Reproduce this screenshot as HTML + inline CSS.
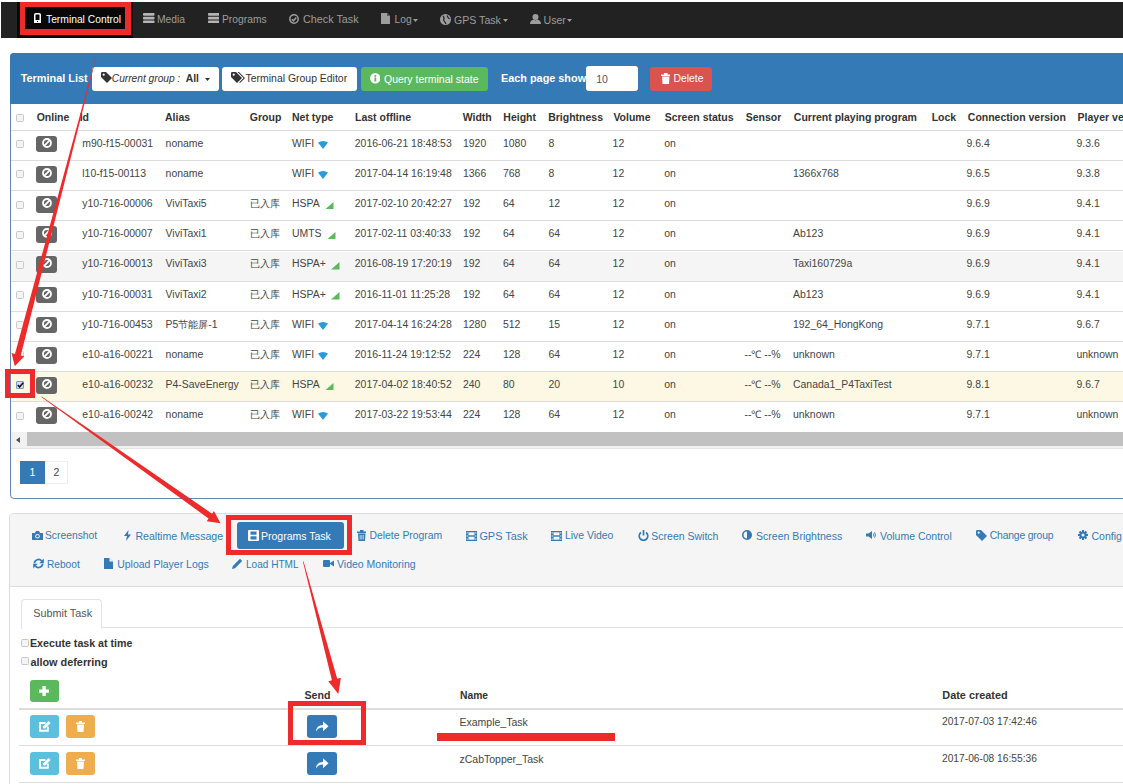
<!DOCTYPE html>
<html><head><meta charset="utf-8"><style>
html,body{margin:0;padding:0;}
body{width:1123px;height:784px;overflow:hidden;position:relative;background:#fff;font-family:"Liberation Sans", sans-serif;}
</style></head><body>
<div style="position:absolute;left:1px;top:2px;width:1122px;height:35.5px;background:#222;"></div>
<div style="position:absolute;left:17px;top:2px;width:115.5px;height:35.5px;background:#080808;"></div>
<svg style="position:absolute;left:34px;top:13px;" width="7" height="10" viewBox="0 0 7 10"><rect x="0.75" y="0.75" width="5.5" height="8.5" rx="1" fill="none" stroke="#fff" stroke-width="1.5"/><rect x="0" y="7" width="7" height="3" fill="#fff"/><rect x="3" y="8" width="1" height="1" fill="#080808"/></svg>
<span style="position:absolute;left:46px;top:14.78px;font-size:10.3px;line-height:10.3px;color:#fff;font-weight:normal;font-style:normal;white-space:nowrap;">Terminal Control</span>
<svg style="position:absolute;left:143px;top:12.8px;" width="11.5" height="10.2" viewBox="0 0 11.5 10.2"><rect x="0" y="0" width="11.5" height="2.8" rx="0.8" fill="#b4b4b4"/><rect x="0" y="3.7" width="11.5" height="2.8" rx="0.8" fill="#b4b4b4"/><rect x="0" y="7.4" width="11.5" height="2.8" rx="0.8" fill="#b4b4b4"/></svg>
<span style="position:absolute;left:157px;top:14.78px;font-size:10.3px;line-height:10.3px;color:#9d9d9d;font-weight:normal;font-style:normal;white-space:nowrap;">Media</span>
<svg style="position:absolute;left:207.8px;top:12.8px;" width="11.5" height="10.2" viewBox="0 0 11.5 10.2"><rect x="0" y="0" width="11.5" height="2.8" rx="0.8" fill="#b4b4b4"/><rect x="0" y="3.7" width="11.5" height="2.8" rx="0.8" fill="#b4b4b4"/><rect x="0" y="7.4" width="11.5" height="2.8" rx="0.8" fill="#b4b4b4"/></svg>
<span style="position:absolute;left:222px;top:14.78px;font-size:10.3px;line-height:10.3px;color:#9d9d9d;font-weight:normal;font-style:normal;white-space:nowrap;">Programs</span>
<svg style="position:absolute;left:289px;top:14px;" width="10" height="10" viewBox="0 0 10 10"><circle cx="5" cy="5" r="4.2" fill="none" stroke="#9d9d9d" stroke-width="1.5"/><path d="M2.8 5.2 L4.4 6.8 L7.3 3.6" fill="none" stroke="#9d9d9d" stroke-width="1.5"/></svg>
<span style="position:absolute;left:303px;top:14.36px;font-size:10.8px;line-height:10.8px;color:#9d9d9d;font-weight:normal;font-style:normal;white-space:nowrap;">Check Task</span>
<svg style="position:absolute;left:381px;top:13px;" width="9" height="11" viewBox="0 0 9 11"><path d="M0 0 H6 L9 3 V11 H0 Z" fill="#9d9d9d"/><path d="M6 0 V3 H9" fill="#555"/></svg>
<span style="position:absolute;left:394.5px;top:14.78px;font-size:10.3px;line-height:10.3px;color:#9d9d9d;font-weight:normal;font-style:normal;white-space:nowrap;">Log</span>
<svg style="position:absolute;left:413px;top:19px;" width="5" height="3" viewBox="0 0 5 3"><path d="M0 0 H5 L2.5 3 Z" fill="#9d9d9d"/></svg>
<svg style="position:absolute;left:439.5px;top:13.5px;" width="11" height="11" viewBox="0 0 11 11"><circle cx="5.5" cy="5.5" r="5.5" fill="#9d9d9d"/><path d="M3 2 Q5 4 3.5 6 Q5 8 6 10 M7 1.5 Q8 4 9.5 5" stroke="#222" stroke-width="1.2" fill="none"/></svg>
<span style="position:absolute;left:454px;top:14.53px;font-size:10.6px;line-height:10.6px;color:#9d9d9d;font-weight:normal;font-style:normal;white-space:nowrap;">GPS Task</span>
<svg style="position:absolute;left:503px;top:19px;" width="5" height="3" viewBox="0 0 5 3"><path d="M0 0 H5 L2.5 3 Z" fill="#9d9d9d"/></svg>
<svg style="position:absolute;left:530px;top:13.5px;" width="11" height="10" viewBox="0 0 11 10"><circle cx="5.5" cy="3" r="3" fill="#9d9d9d"/><path d="M0 10 Q0 6 4 5.5 L5.5 6.5 L7 5.5 Q11 6 11 10 Z" fill="#9d9d9d"/></svg>
<span style="position:absolute;left:543.5px;top:14.53px;font-size:10.6px;line-height:10.6px;color:#9d9d9d;font-weight:normal;font-style:normal;white-space:nowrap;">User</span>
<svg style="position:absolute;left:567px;top:19px;" width="5" height="3" viewBox="0 0 5 3"><path d="M0 0 H5 L2.5 3 Z" fill="#9d9d9d"/></svg>
<div style="position:absolute;left:9.5px;top:53px;width:1200px;height:444px;border:1px solid #6489b0;border-radius:4px;background:#fff;"></div>
<div style="position:absolute;left:9.5px;top:53px;width:1202px;height:50.5px;background:#337ab7;border-radius:4px 4px 0 0;"></div>
<span style="position:absolute;left:20.7px;top:72.57px;font-size:10.9px;line-height:10.9px;color:#fff;font-weight:bold;font-style:normal;white-space:nowrap;">Terminal List</span>
<div style="position:absolute;left:92.3px;top:67px;width:126.5px;height:23.5px;background:#fff;border-radius:3px;"></div>
<svg style="position:absolute;left:100.5px;top:71.5px;" width="11" height="11" viewBox="0 0 11 11"><path d="M0 1.2 Q0 0 1.2 0 H5 L11 6 L6 11 L0 5 Z" fill="#333"/><circle cx="2.7" cy="2.7" r="1.1" fill="#fff"/></svg>
<span style="position:absolute;left:111.8px;top:73.57px;font-size:10.2px;line-height:10.2px;color:#333;font-weight:normal;font-style:italic;white-space:nowrap;">Current group</span>
<span style="position:absolute;left:177.2px;top:73.57px;font-size:10.2px;line-height:10.2px;color:#333;font-weight:normal;font-style:italic;white-space:nowrap;">:</span>
<span style="position:absolute;left:185.8px;top:73.58px;font-size:10.3px;line-height:10.3px;color:#333;font-weight:bold;font-style:normal;white-space:nowrap;">All</span>
<svg style="position:absolute;left:205px;top:78px;" width="5" height="3" viewBox="0 0 5 3"><path d="M0 0 H5 L2.5 3 Z" fill="#333"/></svg>
<div style="position:absolute;left:222px;top:67px;width:135px;height:23.5px;background:#fff;border-radius:3px;"></div>
<svg style="position:absolute;left:231px;top:71.5px;" width="14" height="11" viewBox="0 0 14 11"><path d="M0 1.2 Q0 0 1.2 0 H5 L11 6 L6 11 L0 5 Z" fill="#333"/><circle cx="2.7" cy="2.7" r="1.1" fill="#fff"/><path d="M6.5 0 H8 L14 6 L9 11 L8.3 10.3 L12.6 6 Z" fill="#333"/></svg>
<span style="position:absolute;left:245.6px;top:73.95px;font-size:10.45px;line-height:10.45px;color:#333;font-weight:normal;font-style:normal;white-space:nowrap;">Terminal Group Editor</span>
<div style="position:absolute;left:360.7px;top:67px;width:127px;height:23.5px;background:#5cb85c;border-radius:3px;"></div>
<svg style="position:absolute;left:369.5px;top:73px;" width="10.5" height="10.5" viewBox="0 0 10.5 10.5"><circle cx="5.25" cy="5.25" r="5.25" fill="#fff"/><rect x="4.4" y="4.5" width="1.8" height="4" fill="#5cb85c"/><circle cx="5.3" cy="2.9" r="1" fill="#5cb85c"/></svg>
<span style="position:absolute;left:384px;top:73.91px;font-size:10.5px;line-height:10.5px;color:#fff;font-weight:normal;font-style:normal;white-space:nowrap;">Query terminal state</span>
<span style="position:absolute;left:501px;top:73.30px;font-size:10.87px;line-height:10.87px;color:#fff;font-weight:bold;font-style:normal;white-space:nowrap;">Each page show</span>
<div style="position:absolute;left:586px;top:66px;width:51.5px;height:25px;background:#fff;border-radius:3px;"></div>
<span style="position:absolute;left:596.2px;top:74.11px;font-size:10.5px;line-height:10.5px;color:#555;font-weight:normal;font-style:normal;white-space:nowrap;">10</span>
<div style="position:absolute;left:650.4px;top:67px;width:62px;height:23.5px;background:#d9534f;border-radius:3px;"></div>
<svg style="position:absolute;left:660.5px;top:72.5px;" width="9.5" height="11" viewBox="0 0 9.5 11"><rect x="0" y="1.5" width="9.5" height="1.5" fill="#fff"/><rect x="3" y="0" width="3.5" height="2" fill="#fff"/><path d="M1 3.5 H8.5 L8 11 H1.5 Z" fill="#fff"/></svg>
<span style="position:absolute;left:673.5px;top:74.00px;font-size:10.4px;line-height:10.4px;color:#fff;font-weight:normal;font-style:normal;white-space:nowrap;">Delete</span>
<div style="position:absolute;left:16px;top:113.5px;width:8px;height:8px;background:#f4f4f4;border:1px solid #c8c8c8;border-radius:1.5px;box-sizing:border-box;"></div>
<span style="position:absolute;left:36.7px;top:111.91px;font-size:10.5px;line-height:10.5px;color:#333;font-weight:bold;font-style:normal;white-space:nowrap;">Online</span>
<span style="position:absolute;left:79.7px;top:111.91px;font-size:10.5px;line-height:10.5px;color:#333;font-weight:bold;font-style:normal;white-space:nowrap;">Id</span>
<span style="position:absolute;left:165px;top:111.91px;font-size:10.5px;line-height:10.5px;color:#333;font-weight:bold;font-style:normal;white-space:nowrap;">Alias</span>
<span style="position:absolute;left:249.8px;top:111.91px;font-size:10.5px;line-height:10.5px;color:#333;font-weight:bold;font-style:normal;white-space:nowrap;">Group</span>
<span style="position:absolute;left:292px;top:111.91px;font-size:10.5px;line-height:10.5px;color:#333;font-weight:bold;font-style:normal;white-space:nowrap;">Net type</span>
<span style="position:absolute;left:355px;top:111.91px;font-size:10.5px;line-height:10.5px;color:#333;font-weight:bold;font-style:normal;white-space:nowrap;">Last offline</span>
<span style="position:absolute;left:462.7px;top:111.91px;font-size:10.5px;line-height:10.5px;color:#333;font-weight:bold;font-style:normal;white-space:nowrap;">Width</span>
<span style="position:absolute;left:503.3px;top:111.91px;font-size:10.5px;line-height:10.5px;color:#333;font-weight:bold;font-style:normal;white-space:nowrap;">Height</span>
<span style="position:absolute;left:548.2px;top:111.91px;font-size:10.5px;line-height:10.5px;color:#333;font-weight:bold;font-style:normal;white-space:nowrap;">Brightness</span>
<span style="position:absolute;left:613.4px;top:111.91px;font-size:10.5px;line-height:10.5px;color:#333;font-weight:bold;font-style:normal;white-space:nowrap;">Volume</span>
<span style="position:absolute;left:664.7px;top:111.91px;font-size:10.5px;line-height:10.5px;color:#333;font-weight:bold;font-style:normal;white-space:nowrap;">Screen status</span>
<span style="position:absolute;left:745.7px;top:111.91px;font-size:10.5px;line-height:10.5px;color:#333;font-weight:bold;font-style:normal;white-space:nowrap;">Sensor</span>
<span style="position:absolute;left:793.8px;top:111.91px;font-size:10.5px;line-height:10.5px;color:#333;font-weight:bold;font-style:normal;white-space:nowrap;">Current playing program</span>
<span style="position:absolute;left:931.7px;top:111.91px;font-size:10.5px;line-height:10.5px;color:#333;font-weight:bold;font-style:normal;white-space:nowrap;">Lock</span>
<span style="position:absolute;left:967.8px;top:111.91px;font-size:10.5px;line-height:10.5px;color:#333;font-weight:bold;font-style:normal;white-space:nowrap;">Connection version</span>
<span style="position:absolute;left:1077.6px;top:111.91px;font-size:10.5px;line-height:10.5px;color:#333;font-weight:bold;font-style:normal;white-space:nowrap;">Player version</span>
<div style="position:absolute;left:10.5px;top:129.7px;width:1113px;height:1px;background:#ddd;"></div>
<div style="position:absolute;left:10.5px;top:131.2px;width:1113px;height:29.16px;background:#fff;"></div>
<div style="position:absolute;left:10.5px;top:159.85999999999999px;width:1113px;height:1px;background:#ddd;"></div>
<div style="position:absolute;left:16px;top:140.2px;width:8px;height:8px;background:#f4f4f4;border:1px solid #c8c8c8;border-radius:1.5px;box-sizing:border-box;"></div>
<div style="position:absolute;left:36.3px;top:135.70px;width:21px;height:16.8px;background:#666;border-radius:3px;"></div>
<svg style="position:absolute;left:42px;top:137.79999999999998px;" width="10" height="10" viewBox="0 0 10 10"><circle cx="5" cy="5" r="4" fill="none" stroke="#fff" stroke-width="1.8"/><path d="M2.2 7.8 L7.8 2.2" stroke="#fff" stroke-width="1.8"/></svg>
<span style="position:absolute;left:82.3px;top:138.75px;font-size:10.45px;line-height:10.45px;color:#444;font-weight:normal;font-style:normal;white-space:nowrap;">m90-f15-00031</span>
<span style="position:absolute;left:165.6px;top:138.75px;font-size:10.45px;line-height:10.45px;color:#444;font-weight:normal;font-style:normal;white-space:nowrap;">noname</span>
<span style="position:absolute;left:292px;top:138.75px;font-size:10.45px;line-height:10.45px;color:#444;font-weight:normal;font-style:normal;white-space:nowrap;">WIFI</span>
<svg style="position:absolute;left:318.052765625px;top:140.7px;" width="10" height="8" viewBox="0 0 10 8"><path d="M0 1.5 Q5 -1.5 10 1.5 L5 8 Z" fill="#2a9ad8"/></svg>
<span style="position:absolute;left:354.8px;top:138.75px;font-size:10.45px;line-height:10.45px;color:#444;font-weight:normal;font-style:normal;white-space:nowrap;">2016-06-21 18:48:53</span>
<span style="position:absolute;left:463px;top:138.75px;font-size:10.45px;line-height:10.45px;color:#444;font-weight:normal;font-style:normal;white-space:nowrap;">1920</span>
<span style="position:absolute;left:503px;top:138.75px;font-size:10.45px;line-height:10.45px;color:#444;font-weight:normal;font-style:normal;white-space:nowrap;">1080</span>
<span style="position:absolute;left:548.5px;top:138.75px;font-size:10.45px;line-height:10.45px;color:#444;font-weight:normal;font-style:normal;white-space:nowrap;">8</span>
<span style="position:absolute;left:612.6px;top:138.75px;font-size:10.45px;line-height:10.45px;color:#444;font-weight:normal;font-style:normal;white-space:nowrap;">12</span>
<span style="position:absolute;left:664.3px;top:138.75px;font-size:10.45px;line-height:10.45px;color:#444;font-weight:normal;font-style:normal;white-space:nowrap;">on</span>
<span style="position:absolute;left:966.5px;top:138.75px;font-size:10.45px;line-height:10.45px;color:#444;font-weight:normal;font-style:normal;white-space:nowrap;">9.6.4</span>
<span style="position:absolute;left:1076.5px;top:138.75px;font-size:10.45px;line-height:10.45px;color:#444;font-weight:normal;font-style:normal;white-space:nowrap;">9.3.6</span>
<div style="position:absolute;left:10.5px;top:161.35999999999999px;width:1113px;height:29.16px;background:#fff;"></div>
<div style="position:absolute;left:10.5px;top:190.01999999999998px;width:1113px;height:1px;background:#ddd;"></div>
<div style="position:absolute;left:16px;top:170.35999999999999px;width:8px;height:8px;background:#f4f4f4;border:1px solid #c8c8c8;border-radius:1.5px;box-sizing:border-box;"></div>
<div style="position:absolute;left:36.3px;top:165.86px;width:21px;height:16.8px;background:#666;border-radius:3px;"></div>
<svg style="position:absolute;left:42px;top:167.95999999999998px;" width="10" height="10" viewBox="0 0 10 10"><circle cx="5" cy="5" r="4" fill="none" stroke="#fff" stroke-width="1.8"/><path d="M2.2 7.8 L7.8 2.2" stroke="#fff" stroke-width="1.8"/></svg>
<span style="position:absolute;left:82.3px;top:168.91px;font-size:10.45px;line-height:10.45px;color:#444;font-weight:normal;font-style:normal;white-space:nowrap;">l10-f15-00113</span>
<span style="position:absolute;left:165.6px;top:168.91px;font-size:10.45px;line-height:10.45px;color:#444;font-weight:normal;font-style:normal;white-space:nowrap;">noname</span>
<span style="position:absolute;left:292px;top:168.91px;font-size:10.45px;line-height:10.45px;color:#444;font-weight:normal;font-style:normal;white-space:nowrap;">WIFI</span>
<svg style="position:absolute;left:318.052765625px;top:170.85999999999999px;" width="10" height="8" viewBox="0 0 10 8"><path d="M0 1.5 Q5 -1.5 10 1.5 L5 8 Z" fill="#2a9ad8"/></svg>
<span style="position:absolute;left:354.8px;top:168.91px;font-size:10.45px;line-height:10.45px;color:#444;font-weight:normal;font-style:normal;white-space:nowrap;">2017-04-14 16:19:48</span>
<span style="position:absolute;left:463px;top:168.91px;font-size:10.45px;line-height:10.45px;color:#444;font-weight:normal;font-style:normal;white-space:nowrap;">1366</span>
<span style="position:absolute;left:503px;top:168.91px;font-size:10.45px;line-height:10.45px;color:#444;font-weight:normal;font-style:normal;white-space:nowrap;">768</span>
<span style="position:absolute;left:548.5px;top:168.91px;font-size:10.45px;line-height:10.45px;color:#444;font-weight:normal;font-style:normal;white-space:nowrap;">8</span>
<span style="position:absolute;left:612.6px;top:168.91px;font-size:10.45px;line-height:10.45px;color:#444;font-weight:normal;font-style:normal;white-space:nowrap;">12</span>
<span style="position:absolute;left:664.3px;top:168.91px;font-size:10.45px;line-height:10.45px;color:#444;font-weight:normal;font-style:normal;white-space:nowrap;">on</span>
<span style="position:absolute;left:793px;top:168.91px;font-size:10.45px;line-height:10.45px;color:#444;font-weight:normal;font-style:normal;white-space:nowrap;">1366x768</span>
<span style="position:absolute;left:966.5px;top:168.91px;font-size:10.45px;line-height:10.45px;color:#444;font-weight:normal;font-style:normal;white-space:nowrap;">9.6.5</span>
<span style="position:absolute;left:1076.5px;top:168.91px;font-size:10.45px;line-height:10.45px;color:#444;font-weight:normal;font-style:normal;white-space:nowrap;">9.3.8</span>
<div style="position:absolute;left:10.5px;top:191.51999999999998px;width:1113px;height:29.16px;background:#fff;"></div>
<div style="position:absolute;left:10.5px;top:220.17999999999998px;width:1113px;height:1px;background:#ddd;"></div>
<div style="position:absolute;left:16px;top:200.51999999999998px;width:8px;height:8px;background:#f4f4f4;border:1px solid #c8c8c8;border-radius:1.5px;box-sizing:border-box;"></div>
<div style="position:absolute;left:36.3px;top:196.02px;width:21px;height:16.8px;background:#666;border-radius:3px;"></div>
<svg style="position:absolute;left:42px;top:198.11999999999998px;" width="10" height="10" viewBox="0 0 10 10"><circle cx="5" cy="5" r="4" fill="none" stroke="#fff" stroke-width="1.8"/><path d="M2.2 7.8 L7.8 2.2" stroke="#fff" stroke-width="1.8"/></svg>
<span style="position:absolute;left:82.3px;top:199.07px;font-size:10.45px;line-height:10.45px;color:#444;font-weight:normal;font-style:normal;white-space:nowrap;">y10-716-00006</span>
<span style="position:absolute;left:165.6px;top:199.07px;font-size:10.45px;line-height:10.45px;color:#444;font-weight:normal;font-style:normal;white-space:nowrap;">ViviTaxi5</span>
<span style="position:absolute;left:249.8px;top:199.07px;font-size:10.45px;line-height:10.45px;color:#444;font-weight:normal;font-style:normal;white-space:nowrap;">已入库</span>
<span style="position:absolute;left:292px;top:199.07px;font-size:10.45px;line-height:10.45px;color:#444;font-weight:normal;font-style:normal;white-space:nowrap;">HSPA</span>
<svg style="position:absolute;left:325.182703125px;top:201.82px;" width="8.5" height="7.5" viewBox="0 0 8.5 7.5"><path d="M8.5 0 V7.5 H0 Z" fill="#5cb85c"/></svg>
<span style="position:absolute;left:354.8px;top:199.07px;font-size:10.45px;line-height:10.45px;color:#444;font-weight:normal;font-style:normal;white-space:nowrap;">2017-02-10 20:42:27</span>
<span style="position:absolute;left:463px;top:199.07px;font-size:10.45px;line-height:10.45px;color:#444;font-weight:normal;font-style:normal;white-space:nowrap;">192</span>
<span style="position:absolute;left:503px;top:199.07px;font-size:10.45px;line-height:10.45px;color:#444;font-weight:normal;font-style:normal;white-space:nowrap;">64</span>
<span style="position:absolute;left:548.5px;top:199.07px;font-size:10.45px;line-height:10.45px;color:#444;font-weight:normal;font-style:normal;white-space:nowrap;">12</span>
<span style="position:absolute;left:612.6px;top:199.07px;font-size:10.45px;line-height:10.45px;color:#444;font-weight:normal;font-style:normal;white-space:nowrap;">12</span>
<span style="position:absolute;left:664.3px;top:199.07px;font-size:10.45px;line-height:10.45px;color:#444;font-weight:normal;font-style:normal;white-space:nowrap;">on</span>
<span style="position:absolute;left:966.5px;top:199.07px;font-size:10.45px;line-height:10.45px;color:#444;font-weight:normal;font-style:normal;white-space:nowrap;">9.6.9</span>
<span style="position:absolute;left:1076.5px;top:199.07px;font-size:10.45px;line-height:10.45px;color:#444;font-weight:normal;font-style:normal;white-space:nowrap;">9.4.1</span>
<div style="position:absolute;left:10.5px;top:221.68px;width:1113px;height:29.16px;background:#fff;"></div>
<div style="position:absolute;left:10.5px;top:250.34px;width:1113px;height:1px;background:#ddd;"></div>
<div style="position:absolute;left:16px;top:230.68px;width:8px;height:8px;background:#f4f4f4;border:1px solid #c8c8c8;border-radius:1.5px;box-sizing:border-box;"></div>
<div style="position:absolute;left:36.3px;top:226.18px;width:21px;height:16.8px;background:#666;border-radius:3px;"></div>
<svg style="position:absolute;left:42px;top:228.28px;" width="10" height="10" viewBox="0 0 10 10"><circle cx="5" cy="5" r="4" fill="none" stroke="#fff" stroke-width="1.8"/><path d="M2.2 7.8 L7.8 2.2" stroke="#fff" stroke-width="1.8"/></svg>
<span style="position:absolute;left:82.3px;top:229.23px;font-size:10.45px;line-height:10.45px;color:#444;font-weight:normal;font-style:normal;white-space:nowrap;">y10-716-00007</span>
<span style="position:absolute;left:165.6px;top:229.23px;font-size:10.45px;line-height:10.45px;color:#444;font-weight:normal;font-style:normal;white-space:nowrap;">ViviTaxi1</span>
<span style="position:absolute;left:249.8px;top:229.23px;font-size:10.45px;line-height:10.45px;color:#444;font-weight:normal;font-style:normal;white-space:nowrap;">已入库</span>
<span style="position:absolute;left:292px;top:229.23px;font-size:10.45px;line-height:10.45px;color:#444;font-weight:normal;font-style:normal;white-space:nowrap;">UMTS</span>
<svg style="position:absolute;left:327.1045234375px;top:231.98000000000002px;" width="8.5" height="7.5" viewBox="0 0 8.5 7.5"><path d="M8.5 0 V7.5 H0 Z" fill="#5cb85c"/></svg>
<span style="position:absolute;left:354.8px;top:229.23px;font-size:10.45px;line-height:10.45px;color:#444;font-weight:normal;font-style:normal;white-space:nowrap;">2017-02-11 03:40:33</span>
<span style="position:absolute;left:463px;top:229.23px;font-size:10.45px;line-height:10.45px;color:#444;font-weight:normal;font-style:normal;white-space:nowrap;">192</span>
<span style="position:absolute;left:503px;top:229.23px;font-size:10.45px;line-height:10.45px;color:#444;font-weight:normal;font-style:normal;white-space:nowrap;">64</span>
<span style="position:absolute;left:548.5px;top:229.23px;font-size:10.45px;line-height:10.45px;color:#444;font-weight:normal;font-style:normal;white-space:nowrap;">64</span>
<span style="position:absolute;left:612.6px;top:229.23px;font-size:10.45px;line-height:10.45px;color:#444;font-weight:normal;font-style:normal;white-space:nowrap;">12</span>
<span style="position:absolute;left:664.3px;top:229.23px;font-size:10.45px;line-height:10.45px;color:#444;font-weight:normal;font-style:normal;white-space:nowrap;">on</span>
<span style="position:absolute;left:793px;top:229.23px;font-size:10.45px;line-height:10.45px;color:#444;font-weight:normal;font-style:normal;white-space:nowrap;">Ab123</span>
<span style="position:absolute;left:966.5px;top:229.23px;font-size:10.45px;line-height:10.45px;color:#444;font-weight:normal;font-style:normal;white-space:nowrap;">9.6.9</span>
<span style="position:absolute;left:1076.5px;top:229.23px;font-size:10.45px;line-height:10.45px;color:#444;font-weight:normal;font-style:normal;white-space:nowrap;">9.4.1</span>
<div style="position:absolute;left:10.5px;top:251.83999999999997px;width:1113px;height:29.16px;background:#f5f5f5;"></div>
<div style="position:absolute;left:10.5px;top:280.5px;width:1113px;height:1px;background:#ddd;"></div>
<div style="position:absolute;left:16px;top:260.84px;width:8px;height:8px;background:#f4f4f4;border:1px solid #c8c8c8;border-radius:1.5px;box-sizing:border-box;"></div>
<div style="position:absolute;left:36.3px;top:256.34px;width:21px;height:16.8px;background:#666;border-radius:3px;"></div>
<svg style="position:absolute;left:42px;top:258.44px;" width="10" height="10" viewBox="0 0 10 10"><circle cx="5" cy="5" r="4" fill="none" stroke="#fff" stroke-width="1.8"/><path d="M2.2 7.8 L7.8 2.2" stroke="#fff" stroke-width="1.8"/></svg>
<span style="position:absolute;left:82.3px;top:259.39px;font-size:10.45px;line-height:10.45px;color:#444;font-weight:normal;font-style:normal;white-space:nowrap;">y10-716-00013</span>
<span style="position:absolute;left:165.6px;top:259.39px;font-size:10.45px;line-height:10.45px;color:#444;font-weight:normal;font-style:normal;white-space:nowrap;">ViviTaxi3</span>
<span style="position:absolute;left:249.8px;top:259.39px;font-size:10.45px;line-height:10.45px;color:#444;font-weight:normal;font-style:normal;white-space:nowrap;">已入库</span>
<span style="position:absolute;left:292px;top:259.39px;font-size:10.45px;line-height:10.45px;color:#444;font-weight:normal;font-style:normal;white-space:nowrap;">HSPA+</span>
<svg style="position:absolute;left:331.28615625px;top:262.14px;" width="8.5" height="7.5" viewBox="0 0 8.5 7.5"><path d="M8.5 0 V7.5 H0 Z" fill="#5cb85c"/></svg>
<span style="position:absolute;left:354.8px;top:259.39px;font-size:10.45px;line-height:10.45px;color:#444;font-weight:normal;font-style:normal;white-space:nowrap;">2016-08-19 17:20:19</span>
<span style="position:absolute;left:463px;top:259.39px;font-size:10.45px;line-height:10.45px;color:#444;font-weight:normal;font-style:normal;white-space:nowrap;">192</span>
<span style="position:absolute;left:503px;top:259.39px;font-size:10.45px;line-height:10.45px;color:#444;font-weight:normal;font-style:normal;white-space:nowrap;">64</span>
<span style="position:absolute;left:548.5px;top:259.39px;font-size:10.45px;line-height:10.45px;color:#444;font-weight:normal;font-style:normal;white-space:nowrap;">64</span>
<span style="position:absolute;left:612.6px;top:259.39px;font-size:10.45px;line-height:10.45px;color:#444;font-weight:normal;font-style:normal;white-space:nowrap;">12</span>
<span style="position:absolute;left:664.3px;top:259.39px;font-size:10.45px;line-height:10.45px;color:#444;font-weight:normal;font-style:normal;white-space:nowrap;">on</span>
<span style="position:absolute;left:793px;top:259.39px;font-size:10.45px;line-height:10.45px;color:#444;font-weight:normal;font-style:normal;white-space:nowrap;">Taxi160729a</span>
<span style="position:absolute;left:966.5px;top:259.39px;font-size:10.45px;line-height:10.45px;color:#444;font-weight:normal;font-style:normal;white-space:nowrap;">9.6.9</span>
<span style="position:absolute;left:1076.5px;top:259.39px;font-size:10.45px;line-height:10.45px;color:#444;font-weight:normal;font-style:normal;white-space:nowrap;">9.4.1</span>
<div style="position:absolute;left:10.5px;top:282.0px;width:1113px;height:29.16px;background:#fff;"></div>
<div style="position:absolute;left:10.5px;top:310.66px;width:1113px;height:1px;background:#ddd;"></div>
<div style="position:absolute;left:16px;top:291.0px;width:8px;height:8px;background:#f4f4f4;border:1px solid #c8c8c8;border-radius:1.5px;box-sizing:border-box;"></div>
<div style="position:absolute;left:36.3px;top:286.50px;width:21px;height:16.8px;background:#666;border-radius:3px;"></div>
<svg style="position:absolute;left:42px;top:288.6px;" width="10" height="10" viewBox="0 0 10 10"><circle cx="5" cy="5" r="4" fill="none" stroke="#fff" stroke-width="1.8"/><path d="M2.2 7.8 L7.8 2.2" stroke="#fff" stroke-width="1.8"/></svg>
<span style="position:absolute;left:82.3px;top:289.55px;font-size:10.45px;line-height:10.45px;color:#444;font-weight:normal;font-style:normal;white-space:nowrap;">y10-716-00031</span>
<span style="position:absolute;left:165.6px;top:289.55px;font-size:10.45px;line-height:10.45px;color:#444;font-weight:normal;font-style:normal;white-space:nowrap;">ViviTaxi2</span>
<span style="position:absolute;left:249.8px;top:289.55px;font-size:10.45px;line-height:10.45px;color:#444;font-weight:normal;font-style:normal;white-space:nowrap;">已入库</span>
<span style="position:absolute;left:292px;top:289.55px;font-size:10.45px;line-height:10.45px;color:#444;font-weight:normal;font-style:normal;white-space:nowrap;">HSPA+</span>
<svg style="position:absolute;left:331.28615625px;top:292.3px;" width="8.5" height="7.5" viewBox="0 0 8.5 7.5"><path d="M8.5 0 V7.5 H0 Z" fill="#5cb85c"/></svg>
<span style="position:absolute;left:354.8px;top:289.55px;font-size:10.45px;line-height:10.45px;color:#444;font-weight:normal;font-style:normal;white-space:nowrap;">2016-11-01 11:25:28</span>
<span style="position:absolute;left:463px;top:289.55px;font-size:10.45px;line-height:10.45px;color:#444;font-weight:normal;font-style:normal;white-space:nowrap;">192</span>
<span style="position:absolute;left:503px;top:289.55px;font-size:10.45px;line-height:10.45px;color:#444;font-weight:normal;font-style:normal;white-space:nowrap;">64</span>
<span style="position:absolute;left:548.5px;top:289.55px;font-size:10.45px;line-height:10.45px;color:#444;font-weight:normal;font-style:normal;white-space:nowrap;">64</span>
<span style="position:absolute;left:612.6px;top:289.55px;font-size:10.45px;line-height:10.45px;color:#444;font-weight:normal;font-style:normal;white-space:nowrap;">12</span>
<span style="position:absolute;left:664.3px;top:289.55px;font-size:10.45px;line-height:10.45px;color:#444;font-weight:normal;font-style:normal;white-space:nowrap;">on</span>
<span style="position:absolute;left:793px;top:289.55px;font-size:10.45px;line-height:10.45px;color:#444;font-weight:normal;font-style:normal;white-space:nowrap;">Ab123</span>
<span style="position:absolute;left:966.5px;top:289.55px;font-size:10.45px;line-height:10.45px;color:#444;font-weight:normal;font-style:normal;white-space:nowrap;">9.6.9</span>
<span style="position:absolute;left:1076.5px;top:289.55px;font-size:10.45px;line-height:10.45px;color:#444;font-weight:normal;font-style:normal;white-space:nowrap;">9.4.1</span>
<div style="position:absolute;left:10.5px;top:312.15999999999997px;width:1113px;height:29.16px;background:#fff;"></div>
<div style="position:absolute;left:10.5px;top:340.82px;width:1113px;height:1px;background:#ddd;"></div>
<div style="position:absolute;left:16px;top:321.15999999999997px;width:8px;height:8px;background:#f4f4f4;border:1px solid #c8c8c8;border-radius:1.5px;box-sizing:border-box;"></div>
<div style="position:absolute;left:36.3px;top:316.66px;width:21px;height:16.8px;background:#666;border-radius:3px;"></div>
<svg style="position:absolute;left:42px;top:318.76px;" width="10" height="10" viewBox="0 0 10 10"><circle cx="5" cy="5" r="4" fill="none" stroke="#fff" stroke-width="1.8"/><path d="M2.2 7.8 L7.8 2.2" stroke="#fff" stroke-width="1.8"/></svg>
<span style="position:absolute;left:82.3px;top:319.71px;font-size:10.45px;line-height:10.45px;color:#444;font-weight:normal;font-style:normal;white-space:nowrap;">y10-716-00453</span>
<span style="position:absolute;left:165.6px;top:319.71px;font-size:10.45px;line-height:10.45px;color:#444;font-weight:normal;font-style:normal;white-space:nowrap;">P5节能屏-1</span>
<span style="position:absolute;left:249.8px;top:319.71px;font-size:10.45px;line-height:10.45px;color:#444;font-weight:normal;font-style:normal;white-space:nowrap;">已入库</span>
<span style="position:absolute;left:292px;top:319.71px;font-size:10.45px;line-height:10.45px;color:#444;font-weight:normal;font-style:normal;white-space:nowrap;">WIFI</span>
<svg style="position:absolute;left:318.052765625px;top:321.65999999999997px;" width="10" height="8" viewBox="0 0 10 8"><path d="M0 1.5 Q5 -1.5 10 1.5 L5 8 Z" fill="#2a9ad8"/></svg>
<span style="position:absolute;left:354.8px;top:319.71px;font-size:10.45px;line-height:10.45px;color:#444;font-weight:normal;font-style:normal;white-space:nowrap;">2017-04-14 16:24:28</span>
<span style="position:absolute;left:463px;top:319.71px;font-size:10.45px;line-height:10.45px;color:#444;font-weight:normal;font-style:normal;white-space:nowrap;">1280</span>
<span style="position:absolute;left:503px;top:319.71px;font-size:10.45px;line-height:10.45px;color:#444;font-weight:normal;font-style:normal;white-space:nowrap;">512</span>
<span style="position:absolute;left:548.5px;top:319.71px;font-size:10.45px;line-height:10.45px;color:#444;font-weight:normal;font-style:normal;white-space:nowrap;">15</span>
<span style="position:absolute;left:612.6px;top:319.71px;font-size:10.45px;line-height:10.45px;color:#444;font-weight:normal;font-style:normal;white-space:nowrap;">12</span>
<span style="position:absolute;left:664.3px;top:319.71px;font-size:10.45px;line-height:10.45px;color:#444;font-weight:normal;font-style:normal;white-space:nowrap;">on</span>
<span style="position:absolute;left:793px;top:319.71px;font-size:10.45px;line-height:10.45px;color:#444;font-weight:normal;font-style:normal;white-space:nowrap;">192_64_HongKong</span>
<span style="position:absolute;left:966.5px;top:319.71px;font-size:10.45px;line-height:10.45px;color:#444;font-weight:normal;font-style:normal;white-space:nowrap;">9.7.1</span>
<span style="position:absolute;left:1076.5px;top:319.71px;font-size:10.45px;line-height:10.45px;color:#444;font-weight:normal;font-style:normal;white-space:nowrap;">9.6.7</span>
<div style="position:absolute;left:10.5px;top:342.32px;width:1113px;height:29.16px;background:#fff;"></div>
<div style="position:absolute;left:10.5px;top:370.98px;width:1113px;height:1px;background:#ddd;"></div>
<div style="position:absolute;left:16px;top:351.32px;width:8px;height:8px;background:#f4f4f4;border:1px solid #c8c8c8;border-radius:1.5px;box-sizing:border-box;"></div>
<div style="position:absolute;left:36.3px;top:346.82px;width:21px;height:16.8px;background:#666;border-radius:3px;"></div>
<svg style="position:absolute;left:42px;top:348.92px;" width="10" height="10" viewBox="0 0 10 10"><circle cx="5" cy="5" r="4" fill="none" stroke="#fff" stroke-width="1.8"/><path d="M2.2 7.8 L7.8 2.2" stroke="#fff" stroke-width="1.8"/></svg>
<span style="position:absolute;left:82.3px;top:349.87px;font-size:10.45px;line-height:10.45px;color:#444;font-weight:normal;font-style:normal;white-space:nowrap;">e10-a16-00221</span>
<span style="position:absolute;left:165.6px;top:349.87px;font-size:10.45px;line-height:10.45px;color:#444;font-weight:normal;font-style:normal;white-space:nowrap;">noname</span>
<span style="position:absolute;left:249.8px;top:349.87px;font-size:10.45px;line-height:10.45px;color:#444;font-weight:normal;font-style:normal;white-space:nowrap;">已入库</span>
<span style="position:absolute;left:292px;top:349.87px;font-size:10.45px;line-height:10.45px;color:#444;font-weight:normal;font-style:normal;white-space:nowrap;">WIFI</span>
<svg style="position:absolute;left:318.052765625px;top:351.82px;" width="10" height="8" viewBox="0 0 10 8"><path d="M0 1.5 Q5 -1.5 10 1.5 L5 8 Z" fill="#2a9ad8"/></svg>
<span style="position:absolute;left:354.8px;top:349.87px;font-size:10.45px;line-height:10.45px;color:#444;font-weight:normal;font-style:normal;white-space:nowrap;">2016-11-24 19:12:52</span>
<span style="position:absolute;left:463px;top:349.87px;font-size:10.45px;line-height:10.45px;color:#444;font-weight:normal;font-style:normal;white-space:nowrap;">224</span>
<span style="position:absolute;left:503px;top:349.87px;font-size:10.45px;line-height:10.45px;color:#444;font-weight:normal;font-style:normal;white-space:nowrap;">128</span>
<span style="position:absolute;left:548.5px;top:349.87px;font-size:10.45px;line-height:10.45px;color:#444;font-weight:normal;font-style:normal;white-space:nowrap;">64</span>
<span style="position:absolute;left:612.6px;top:349.87px;font-size:10.45px;line-height:10.45px;color:#444;font-weight:normal;font-style:normal;white-space:nowrap;">12</span>
<span style="position:absolute;left:664.3px;top:349.87px;font-size:10.45px;line-height:10.45px;color:#444;font-weight:normal;font-style:normal;white-space:nowrap;">on</span>
<span style="position:absolute;left:744.5px;top:349.87px;font-size:10.45px;line-height:10.45px;color:#444;font-weight:normal;font-style:normal;white-space:nowrap;">--℃ --%</span>
<span style="position:absolute;left:793px;top:349.87px;font-size:10.45px;line-height:10.45px;color:#444;font-weight:normal;font-style:normal;white-space:nowrap;">unknown</span>
<span style="position:absolute;left:966.5px;top:349.87px;font-size:10.45px;line-height:10.45px;color:#444;font-weight:normal;font-style:normal;white-space:nowrap;">9.7.1</span>
<span style="position:absolute;left:1076.5px;top:349.87px;font-size:10.45px;line-height:10.45px;color:#444;font-weight:normal;font-style:normal;white-space:nowrap;">unknown</span>
<div style="position:absolute;left:10.5px;top:372.48px;width:1113px;height:29.16px;background:#fcf8e3;"></div>
<div style="position:absolute;left:10.5px;top:401.14000000000004px;width:1113px;height:1px;background:#ddd;"></div>
<div style="position:absolute;left:16px;top:381.48px;width:8px;height:8px;background:#cfe0f4;border:1px solid #7a9cc6;border-radius:1px;box-sizing:border-box;"></div>
<svg style="position:absolute;left:17px;top:382.48px;" width="7" height="6" viewBox="0 0 7 6"><path d="M0.8 3 L2.6 5 L6.2 0.8" stroke="#111" stroke-width="1.6" fill="none"/></svg>
<div style="position:absolute;left:36.3px;top:376.98px;width:21px;height:16.8px;background:#666;border-radius:3px;"></div>
<svg style="position:absolute;left:42px;top:379.08000000000004px;" width="10" height="10" viewBox="0 0 10 10"><circle cx="5" cy="5" r="4" fill="none" stroke="#fff" stroke-width="1.8"/><path d="M2.2 7.8 L7.8 2.2" stroke="#fff" stroke-width="1.8"/></svg>
<span style="position:absolute;left:82.3px;top:380.03px;font-size:10.45px;line-height:10.45px;color:#444;font-weight:normal;font-style:normal;white-space:nowrap;">e10-a16-00232</span>
<span style="position:absolute;left:165.6px;top:380.03px;font-size:10.45px;line-height:10.45px;color:#444;font-weight:normal;font-style:normal;white-space:nowrap;">P4-SaveEnergy</span>
<span style="position:absolute;left:249.8px;top:380.03px;font-size:10.45px;line-height:10.45px;color:#444;font-weight:normal;font-style:normal;white-space:nowrap;">已入库</span>
<span style="position:absolute;left:292px;top:380.03px;font-size:10.45px;line-height:10.45px;color:#444;font-weight:normal;font-style:normal;white-space:nowrap;">HSPA</span>
<svg style="position:absolute;left:325.182703125px;top:382.78000000000003px;" width="8.5" height="7.5" viewBox="0 0 8.5 7.5"><path d="M8.5 0 V7.5 H0 Z" fill="#5cb85c"/></svg>
<span style="position:absolute;left:354.8px;top:380.03px;font-size:10.45px;line-height:10.45px;color:#444;font-weight:normal;font-style:normal;white-space:nowrap;">2017-04-02 18:40:52</span>
<span style="position:absolute;left:463px;top:380.03px;font-size:10.45px;line-height:10.45px;color:#444;font-weight:normal;font-style:normal;white-space:nowrap;">240</span>
<span style="position:absolute;left:503px;top:380.03px;font-size:10.45px;line-height:10.45px;color:#444;font-weight:normal;font-style:normal;white-space:nowrap;">80</span>
<span style="position:absolute;left:548.5px;top:380.03px;font-size:10.45px;line-height:10.45px;color:#444;font-weight:normal;font-style:normal;white-space:nowrap;">20</span>
<span style="position:absolute;left:612.6px;top:380.03px;font-size:10.45px;line-height:10.45px;color:#444;font-weight:normal;font-style:normal;white-space:nowrap;">10</span>
<span style="position:absolute;left:664.3px;top:380.03px;font-size:10.45px;line-height:10.45px;color:#444;font-weight:normal;font-style:normal;white-space:nowrap;">on</span>
<span style="position:absolute;left:744.5px;top:380.03px;font-size:10.45px;line-height:10.45px;color:#444;font-weight:normal;font-style:normal;white-space:nowrap;">--℃ --%</span>
<span style="position:absolute;left:793px;top:380.03px;font-size:10.45px;line-height:10.45px;color:#444;font-weight:normal;font-style:normal;white-space:nowrap;">Canada1_P4TaxiTest</span>
<span style="position:absolute;left:966.5px;top:380.03px;font-size:10.45px;line-height:10.45px;color:#444;font-weight:normal;font-style:normal;white-space:nowrap;">9.8.1</span>
<span style="position:absolute;left:1076.5px;top:380.03px;font-size:10.45px;line-height:10.45px;color:#444;font-weight:normal;font-style:normal;white-space:nowrap;">9.6.7</span>
<div style="position:absolute;left:10.5px;top:402.64px;width:1113px;height:29.16px;background:#fff;"></div>
<div style="position:absolute;left:16px;top:411.64px;width:8px;height:8px;background:#f4f4f4;border:1px solid #c8c8c8;border-radius:1.5px;box-sizing:border-box;"></div>
<div style="position:absolute;left:36.3px;top:407.14px;width:21px;height:16.8px;background:#666;border-radius:3px;"></div>
<svg style="position:absolute;left:42px;top:409.24px;" width="10" height="10" viewBox="0 0 10 10"><circle cx="5" cy="5" r="4" fill="none" stroke="#fff" stroke-width="1.8"/><path d="M2.2 7.8 L7.8 2.2" stroke="#fff" stroke-width="1.8"/></svg>
<span style="position:absolute;left:82.3px;top:410.19px;font-size:10.45px;line-height:10.45px;color:#444;font-weight:normal;font-style:normal;white-space:nowrap;">e10-a16-00242</span>
<span style="position:absolute;left:165.6px;top:410.19px;font-size:10.45px;line-height:10.45px;color:#444;font-weight:normal;font-style:normal;white-space:nowrap;">noname</span>
<span style="position:absolute;left:249.8px;top:410.19px;font-size:10.45px;line-height:10.45px;color:#444;font-weight:normal;font-style:normal;white-space:nowrap;">已入库</span>
<span style="position:absolute;left:292px;top:410.19px;font-size:10.45px;line-height:10.45px;color:#444;font-weight:normal;font-style:normal;white-space:nowrap;">WIFI</span>
<svg style="position:absolute;left:318.052765625px;top:412.14px;" width="10" height="8" viewBox="0 0 10 8"><path d="M0 1.5 Q5 -1.5 10 1.5 L5 8 Z" fill="#2a9ad8"/></svg>
<span style="position:absolute;left:354.8px;top:410.19px;font-size:10.45px;line-height:10.45px;color:#444;font-weight:normal;font-style:normal;white-space:nowrap;">2017-03-22 19:53:44</span>
<span style="position:absolute;left:463px;top:410.19px;font-size:10.45px;line-height:10.45px;color:#444;font-weight:normal;font-style:normal;white-space:nowrap;">224</span>
<span style="position:absolute;left:503px;top:410.19px;font-size:10.45px;line-height:10.45px;color:#444;font-weight:normal;font-style:normal;white-space:nowrap;">128</span>
<span style="position:absolute;left:548.5px;top:410.19px;font-size:10.45px;line-height:10.45px;color:#444;font-weight:normal;font-style:normal;white-space:nowrap;">64</span>
<span style="position:absolute;left:612.6px;top:410.19px;font-size:10.45px;line-height:10.45px;color:#444;font-weight:normal;font-style:normal;white-space:nowrap;">12</span>
<span style="position:absolute;left:664.3px;top:410.19px;font-size:10.45px;line-height:10.45px;color:#444;font-weight:normal;font-style:normal;white-space:nowrap;">on</span>
<span style="position:absolute;left:744.5px;top:410.19px;font-size:10.45px;line-height:10.45px;color:#444;font-weight:normal;font-style:normal;white-space:nowrap;">--℃ --%</span>
<span style="position:absolute;left:793px;top:410.19px;font-size:10.45px;line-height:10.45px;color:#444;font-weight:normal;font-style:normal;white-space:nowrap;">unknown</span>
<span style="position:absolute;left:966.5px;top:410.19px;font-size:10.45px;line-height:10.45px;color:#444;font-weight:normal;font-style:normal;white-space:nowrap;">9.7.1</span>
<span style="position:absolute;left:1076.5px;top:410.19px;font-size:10.45px;line-height:10.45px;color:#444;font-weight:normal;font-style:normal;white-space:nowrap;">unknown</span>
<div style="position:absolute;left:10.5px;top:431.8px;width:1113px;height:16.5px;background:#f1f1f1;"></div>
<div style="position:absolute;left:27.4px;top:432.3px;width:1096px;height:13.4px;background:#c1c1c1;"></div>
<div style="position:absolute;left:10.5px;top:447.6px;width:1113px;height:0.8px;background:#e4e4e4;"></div>
<svg style="position:absolute;left:16px;top:436.5px;" width="4" height="6" viewBox="0 0 4 6"><path d="M4 0 V6 L0 3 Z" fill="#505050"/></svg>
<div style="position:absolute;left:20.2px;top:460.5px;width:24.7px;height:23.3px;background:#337ab7;"></div>
<div style="position:absolute;left:44.9px;top:460.5px;width:23.4px;height:23.3px;background:#fff;border:1px solid #eee;border-left:none;box-sizing:border-box;"></div>
<span style="position:absolute;left:29.4px;top:466.91px;font-size:10.5px;line-height:10.5px;color:#fff;font-weight:normal;font-style:normal;white-space:nowrap;">1</span>
<span style="position:absolute;left:53.6px;top:466.91px;font-size:10.5px;line-height:10.5px;color:#444;font-weight:normal;font-style:normal;white-space:nowrap;">2</span>
<div style="position:absolute;left:9.3px;top:513px;width:1200px;height:300px;border:1px solid #ddd;border-radius:4px;background:#fff;"></div>
<div style="position:absolute;left:10.3px;top:514px;width:1200px;height:72px;background:#f5f5f5;border-bottom:1px solid #ddd;border-radius:3px 0 0 0;"></div>
<svg style="position:absolute;left:32px;top:531px;" width="11" height="9" viewBox="0 0 11 9"><path d="M0 2 H3 L4 0 H7 L8 2 H11 V9 H0 Z" fill="#337ab7"/><circle cx="5.5" cy="5.3" r="2.3" fill="#f5f5f5"/><circle cx="5.5" cy="5.3" r="1.3" fill="#337ab7"/></svg>
<span style="position:absolute;left:45px;top:531.28px;font-size:10.3px;line-height:10.3px;color:#337ab7;font-weight:normal;font-style:normal;white-space:nowrap;">Screenshot</span>
<svg style="position:absolute;left:124px;top:530px;" width="7" height="11" viewBox="0 0 7 11"><path d="M4.5 0 L0 6 H3 L2 11 L7 4.5 H4 Z" fill="#337ab7"/></svg>
<span style="position:absolute;left:135.4px;top:531.03px;font-size:10.6px;line-height:10.6px;color:#337ab7;font-weight:normal;font-style:normal;white-space:nowrap;">Realtime Message</span>
<div style="position:absolute;left:236.9px;top:522px;width:106.9px;height:27.4px;background:#337ab7;border-radius:3px;"></div>
<svg style="position:absolute;left:248px;top:530px;" width="11" height="11" viewBox="0 0 11 11"><rect x="0" y="0" width="11" height="11" rx="1" fill="#fff"/><rect x="2.5" y="1.5" width="6" height="3.2" fill="#337ab7"/><rect x="2.5" y="6.3" width="6" height="3.2" fill="#337ab7"/></svg>
<span style="position:absolute;left:261px;top:531.11px;font-size:10.5px;line-height:10.5px;color:#fff;font-weight:normal;font-style:normal;white-space:nowrap;">Programs Task</span>
<svg style="position:absolute;left:356.5px;top:529.5px;" width="9.5" height="11" viewBox="0 0 9.5 11"><rect x="0" y="1.5" width="9.5" height="1.5" fill="#337ab7"/><rect x="3" y="0" width="3.5" height="2" fill="#337ab7"/><path d="M1 3.5 H8.5 L8 11 H1.5 Z" fill="#337ab7"/><path d="M3.2 5 V9.5 M4.75 5 V9.5 M6.3 5 V9.5" stroke="#f5f5f5" stroke-width="0.7"/></svg>
<span style="position:absolute;left:369.5px;top:531.20px;font-size:10.4px;line-height:10.4px;color:#337ab7;font-weight:normal;font-style:normal;white-space:nowrap;">Delete Program</span>
<svg style="position:absolute;left:465.7px;top:530.5px;" width="11" height="10" viewBox="0 0 11 10"><rect x="0" y="0" width="11" height="10" fill="#337ab7"/><rect x="2.5" y="1.3" width="6" height="3" fill="#f5f5f5"/><rect x="2.5" y="5.7" width="6" height="3" fill="#f5f5f5"/><rect x="0.6" y="1.3" width="1.2" height="1.2" fill="#f5f5f5"/><rect x="0.6" y="4.4" width="1.2" height="1.2" fill="#f5f5f5"/><rect x="0.6" y="7.5" width="1.2" height="1.2" fill="#f5f5f5"/><rect x="9.2" y="1.3" width="1.2" height="1.2" fill="#f5f5f5"/><rect x="9.2" y="4.4" width="1.2" height="1.2" fill="#f5f5f5"/><rect x="9.2" y="7.5" width="1.2" height="1.2" fill="#f5f5f5"/></svg>
<span style="position:absolute;left:479.4px;top:530.77px;font-size:10.9px;line-height:10.9px;color:#337ab7;font-weight:normal;font-style:normal;white-space:nowrap;">GPS Task</span>
<svg style="position:absolute;left:551.4px;top:530.5px;" width="11" height="10" viewBox="0 0 11 10"><rect x="0" y="0" width="11" height="10" fill="#337ab7"/><rect x="2.5" y="1.3" width="6" height="3" fill="#f5f5f5"/><rect x="2.5" y="5.7" width="6" height="3" fill="#f5f5f5"/><rect x="0.6" y="1.3" width="1.2" height="1.2" fill="#f5f5f5"/><rect x="0.6" y="4.4" width="1.2" height="1.2" fill="#f5f5f5"/><rect x="0.6" y="7.5" width="1.2" height="1.2" fill="#f5f5f5"/><rect x="9.2" y="1.3" width="1.2" height="1.2" fill="#f5f5f5"/><rect x="9.2" y="4.4" width="1.2" height="1.2" fill="#f5f5f5"/><rect x="9.2" y="7.5" width="1.2" height="1.2" fill="#f5f5f5"/></svg>
<span style="position:absolute;left:565px;top:531.20px;font-size:10.4px;line-height:10.4px;color:#337ab7;font-weight:normal;font-style:normal;white-space:nowrap;">Live Video</span>
<svg style="position:absolute;left:637.5px;top:529.5px;" width="11" height="11" viewBox="0 0 11 11"><path d="M3 2.5 A4.3 4.3 0 1 0 8 2.5" fill="none" stroke="#337ab7" stroke-width="1.7"/><path d="M5.5 0 V5.5" stroke="#337ab7" stroke-width="1.7"/></svg>
<span style="position:absolute;left:651.3px;top:531.11px;font-size:10.5px;line-height:10.5px;color:#337ab7;font-weight:normal;font-style:normal;white-space:nowrap;">Screen Switch</span>
<svg style="position:absolute;left:742px;top:530px;" width="10" height="10" viewBox="0 0 10 10"><circle cx="5" cy="5" r="4.2" fill="none" stroke="#337ab7" stroke-width="1.6"/><path d="M5 0.8 A4.2 4.2 0 0 1 5 9.2 Z" fill="#337ab7"/></svg>
<span style="position:absolute;left:756px;top:531.07px;font-size:10.55px;line-height:10.55px;color:#337ab7;font-weight:normal;font-style:normal;white-space:nowrap;">Screen Brightness</span>
<svg style="position:absolute;left:866px;top:531px;" width="10" height="8" viewBox="0 0 10 8"><path d="M0 2.5 H2.5 L6 0 V8 L2.5 5.5 H0 Z" fill="#337ab7"/><path d="M7.3 2.5 Q8.5 4 7.3 5.5 M8.5 1.2 Q10.5 4 8.5 6.8" stroke="#337ab7" stroke-width="0.9" fill="none"/></svg>
<span style="position:absolute;left:880px;top:531.11px;font-size:10.5px;line-height:10.5px;color:#337ab7;font-weight:normal;font-style:normal;white-space:nowrap;">Volume Control</span>
<svg style="position:absolute;left:976px;top:529.5px;" width="11" height="11" viewBox="0 0 11 11"><path d="M0 1.2 Q0 0 1.2 0 H5 L11 6 L6 11 L0 5 Z" fill="#337ab7"/><circle cx="2.7" cy="2.7" r="1.1" fill="#f5f5f5"/></svg>
<span style="position:absolute;left:989.8px;top:531.15px;font-size:10.45px;line-height:10.45px;color:#337ab7;font-weight:normal;font-style:normal;white-space:nowrap;letter-spacing:-0.22px;">Change group</span>
<svg style="position:absolute;left:1078px;top:530px;" width="10" height="10" viewBox="0 0 10 10"><circle cx="5" cy="5" r="3.6" fill="#337ab7"/><path d="M5 0 V10 M0 5 H10 M1.5 1.5 L8.5 8.5 M8.5 1.5 L1.5 8.5" stroke="#337ab7" stroke-width="2"/><circle cx="5" cy="5" r="1.5" fill="#f5f5f5"/></svg>
<span style="position:absolute;left:1091.5px;top:531.11px;font-size:10.5px;line-height:10.5px;color:#337ab7;font-weight:normal;font-style:normal;white-space:nowrap;">Config</span>
<svg style="position:absolute;left:33px;top:557.9000000000001px;" width="11" height="11" viewBox="0 0 11 11"><path d="M1.4 5.3 A4.1 4.1 0 0 1 8.6 2.9" fill="none" stroke="#337ab7" stroke-width="1.7"/><path d="M10.8 0.6 V5.2 H6.2 Z" fill="#337ab7"/><path d="M9.6 5.7 A4.1 4.1 0 0 1 2.4 8.1" fill="none" stroke="#337ab7" stroke-width="1.7"/><path d="M0.2 10.4 V5.8 H4.8 Z" fill="#337ab7"/></svg>
<span style="position:absolute;left:46.9px;top:559.57px;font-size:10.2px;line-height:10.2px;color:#337ab7;font-weight:normal;font-style:normal;white-space:nowrap;">Reboot</span>
<svg style="position:absolute;left:103.5px;top:557.7px;" width="9" height="11" viewBox="0 0 9 11"><path d="M0 0 H5.5 L9 3.5 V11 H0 Z" fill="#337ab7"/><path d="M5.5 0 V3.5 H9" fill="#f5f5f5"/></svg>
<span style="position:absolute;left:117.2px;top:559.31px;font-size:10.5px;line-height:10.5px;color:#337ab7;font-weight:normal;font-style:normal;white-space:nowrap;">Upload Player Logs</span>
<svg style="position:absolute;left:232px;top:558.2px;" width="11" height="11" viewBox="0 0 11 11"><path d="M0 11 L0.8 8 L8 0.8 L10.2 3 L3 10.2 Z" fill="#337ab7"/></svg>
<span style="position:absolute;left:246px;top:559.69px;font-size:10.05px;line-height:10.05px;color:#337ab7;font-weight:normal;font-style:normal;white-space:nowrap;">Load HTML</span>
<svg style="position:absolute;left:323px;top:559.7px;" width="11" height="7" viewBox="0 0 11 7"><rect x="0" y="0" width="7" height="7" rx="1" fill="#337ab7"/><path d="M7 3 L11 0.5 V6.5 L7 4 Z" fill="#337ab7"/></svg>
<span style="position:absolute;left:337px;top:559.31px;font-size:10.5px;line-height:10.5px;color:#337ab7;font-weight:normal;font-style:normal;white-space:nowrap;">Video Monitoring</span>
<div style="position:absolute;left:21.2px;top:598.6px;width:81px;height:30px;background:#fff;border:1px solid #e3e3e3;border-bottom:none;border-radius:4px 4px 0 0;box-sizing:border-box;"></div>
<div style="position:absolute;left:102px;top:627.3px;width:1100px;height:1px;background:#e3e3e3;"></div>
<span style="position:absolute;left:33.2px;top:607.80px;font-size:10.87px;line-height:10.87px;color:#555;font-weight:normal;font-style:normal;white-space:nowrap;">Submit Task</span>
<div style="position:absolute;left:21.2px;top:638.5px;width:8px;height:8px;background:#f4f4f4;border:1px solid #c8c8c8;border-radius:1.5px;box-sizing:border-box;"></div>
<span style="position:absolute;left:30px;top:638.47px;font-size:10.67px;line-height:10.67px;color:#333;font-weight:bold;font-style:normal;white-space:nowrap;">Execute task at time</span>
<div style="position:absolute;left:21.2px;top:657px;width:8px;height:8px;background:#f4f4f4;border:1px solid #c8c8c8;border-radius:1.5px;box-sizing:border-box;"></div>
<span style="position:absolute;left:30.4px;top:656.80px;font-size:10.87px;line-height:10.87px;color:#333;font-weight:bold;font-style:normal;white-space:nowrap;">allow deferring</span>
<div style="position:absolute;left:29.6px;top:679.6px;width:29.2px;height:22px;background:#5cb85c;border-radius:3px;"></div>
<svg style="position:absolute;left:39.2px;top:685.5px;" width="10.2" height="10.2" viewBox="0 0 10.2 10.2"><path d="M3.4 0 H6.8 V3.4 H10.2 V6.8 H6.8 V10.2 H3.4 V6.8 H0 V3.4 H3.4 Z" fill="#fff"/></svg>
<span style="position:absolute;left:304.5px;top:690.49px;font-size:10.64px;line-height:10.64px;color:#333;font-weight:bold;font-style:normal;white-space:nowrap;">Send</span>
<span style="position:absolute;left:460px;top:690.78px;font-size:10.3px;line-height:10.3px;color:#333;font-weight:bold;font-style:normal;white-space:nowrap;">Name</span>
<span style="position:absolute;left:942.3px;top:690.29px;font-size:10.88px;line-height:10.88px;color:#333;font-weight:bold;font-style:normal;white-space:nowrap;">Date created</span>
<div style="position:absolute;left:19.2px;top:708.2px;width:1104px;height:1.6px;background:#ddd;"></div>
<div style="position:absolute;left:19.2px;top:745px;width:1104px;height:1px;background:#ddd;"></div>
<div style="position:absolute;left:19.2px;top:781.8px;width:1104px;height:1px;background:#ddd;"></div>
<div style="position:absolute;left:29.8px;top:715.2px;width:29px;height:23px;background:#5bc0de;border-radius:3px;"></div>
<svg style="position:absolute;left:39.2px;top:721.2px;" width="12" height="11" viewBox="0 0 12 11"><path d="M6.5 2 H1 V9.8 H8.8 V5.5" fill="none" stroke="#fff" stroke-width="1.9"/><path d="M3.8 7.3 L4.2 5.2 L9.6 0 L11.6 2 L6.1 7.6 Z" fill="#fff"/></svg>
<div style="position:absolute;left:65.9px;top:715.2px;width:28.7px;height:23px;background:#f0ad4e;border-radius:3px;"></div>
<svg style="position:absolute;left:76px;top:720.7px;" width="9" height="11" viewBox="0 0 9 11"><rect x="0" y="1.5" width="9" height="1.5" fill="#fff"/><rect x="3" y="0" width="3" height="2" fill="#fff"/><path d="M1 3.5 H8 L7.5 11 H1.5 Z" fill="#fff"/></svg>
<div style="position:absolute;left:307px;top:715.2px;width:29.8px;height:23px;background:#337ab7;border-radius:3px;"></div>
<svg style="position:absolute;left:316px;top:721.2px;" width="12.5" height="10.5" viewBox="0 0 12.5 10.5"><path d="M0 10.5 Q0.3 4 7 4 V0.3 L12.5 5.3 L7 10.2 V6.6 Q2.3 6.4 0 10.5 Z" fill="#fff"/></svg>
<span style="position:absolute;left:459.5px;top:716.81px;font-size:10.5px;line-height:10.5px;color:#444;font-weight:normal;font-style:normal;white-space:nowrap;">Example_Task</span>
<span style="position:absolute;left:942px;top:717.04px;font-size:10.23px;line-height:10.23px;color:#444;font-weight:normal;font-style:normal;white-space:nowrap;">2017-07-03 17:42:46</span>
<div style="position:absolute;left:29.8px;top:752px;width:29px;height:23px;background:#5bc0de;border-radius:3px;"></div>
<svg style="position:absolute;left:39.2px;top:758px;" width="12" height="11" viewBox="0 0 12 11"><path d="M6.5 2 H1 V9.8 H8.8 V5.5" fill="none" stroke="#fff" stroke-width="1.9"/><path d="M3.8 7.3 L4.2 5.2 L9.6 0 L11.6 2 L6.1 7.6 Z" fill="#fff"/></svg>
<div style="position:absolute;left:65.9px;top:752px;width:28.7px;height:23px;background:#f0ad4e;border-radius:3px;"></div>
<svg style="position:absolute;left:76px;top:757.5px;" width="9" height="11" viewBox="0 0 9 11"><rect x="0" y="1.5" width="9" height="1.5" fill="#fff"/><rect x="3" y="0" width="3" height="2" fill="#fff"/><path d="M1 3.5 H8 L7.5 11 H1.5 Z" fill="#fff"/></svg>
<div style="position:absolute;left:307px;top:752px;width:29.8px;height:23px;background:#337ab7;border-radius:3px;"></div>
<svg style="position:absolute;left:316px;top:758px;" width="12.5" height="10.5" viewBox="0 0 12.5 10.5"><path d="M0 10.5 Q0.3 4 7 4 V0.3 L12.5 5.3 L7 10.2 V6.6 Q2.3 6.4 0 10.5 Z" fill="#fff"/></svg>
<span style="position:absolute;left:459.5px;top:753.61px;font-size:10.5px;line-height:10.5px;color:#444;font-weight:normal;font-style:normal;white-space:nowrap;">zCabTopper_Task</span>
<span style="position:absolute;left:942px;top:753.84px;font-size:10.23px;line-height:10.23px;color:#444;font-weight:normal;font-style:normal;white-space:nowrap;">2017-06-08 16:55:36</span>
<div style="position:absolute;left:20px;top:2px;width:111px;height:32.6px;border-style:solid;border-color:#ee2a2a;border-width:5.1px 6px 6.2px 5.3px;box-sizing:border-box;"></div>
<div style="position:absolute;left:4.5px;top:368.8px;width:30.799999999999997px;height:29.099999999999966px;border:5.4px solid #ee2a2a;box-sizing:border-box;"></div>
<div style="position:absolute;left:225.6px;top:515px;width:126.4px;height:40.39999999999998px;border:5.8px solid #ee2a2a;box-sizing:border-box;"></div>
<div style="position:absolute;left:287.9px;top:701px;width:77.80000000000001px;height:44.299999999999955px;border:5.8px solid #ee2a2a;box-sizing:border-box;"></div>
<div style="position:absolute;left:436.5px;top:733px;width:178px;height:8px;background:#ee2a2a;"></div>
<svg style="position:absolute;left:0;top:0" width="1123" height="784" viewBox="0 0 1123 784">
<path d="M95.76 56.94 L14.95 353.93 L11.56 353.04 L14.80 366.30 L24.13 356.34 L20.75 355.46 L96.24 57.06 Z" fill="#ee2a2a"/>
<path d="M41.33 396.94 L208.56 518.53 L206.69 521.18 L220.50 523.30 L213.90 510.98 L212.03 513.63 L41.67 396.46 Z" fill="#ee2a2a"/>
<path d="M302.91 561.38 L331.90 680.21 L328.27 681.17 L338.40 694.00 L340.84 677.83 L337.21 678.80 L303.49 561.22 Z" fill="#ee2a2a"/>
</svg>
</body></html>
